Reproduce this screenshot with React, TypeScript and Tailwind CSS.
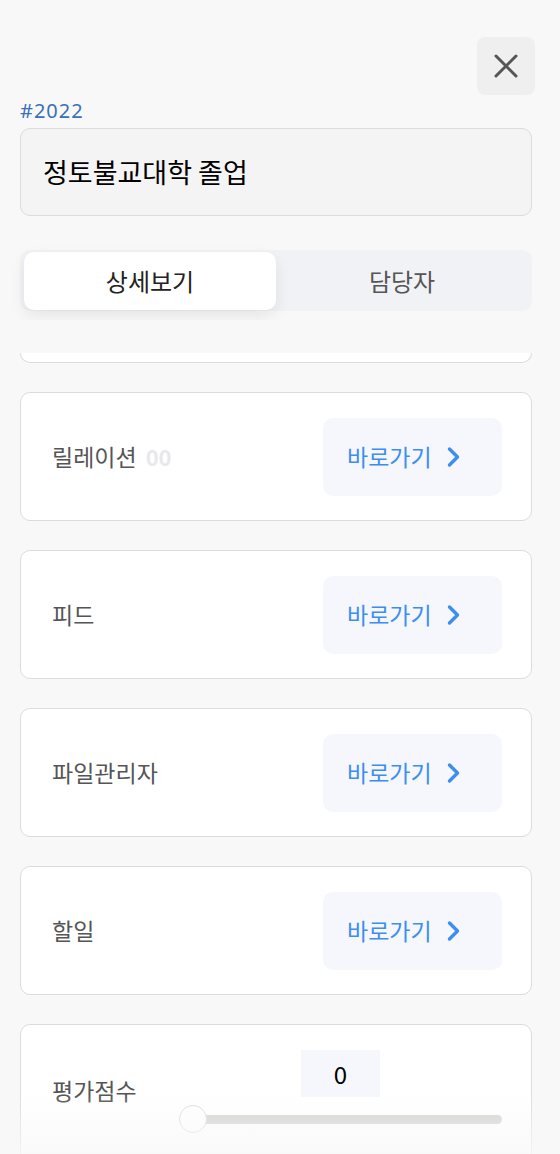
import React from 'react';

const links = ['릴레이션', '피드', '파일관리자', '할일'];

function Chevron() {
  return (
    <svg width="15" height="22" viewBox="0 0 15 22" fill="none" className="ml-[14px]">
      <path d="M3.5 3 L11.5 11 L3.5 19" stroke="#3d8ef0" strokeWidth="3.4" strokeLinecap="round" strokeLinejoin="round" />
    </svg>
  );
}

function LinkCard({ label }: { label: string }) {
  return (
    <div className="flex h-[129px] items-center justify-between rounded-[10px] border border-[#dcdcdc] bg-white pl-[31px] pr-[29px]">
      <div className="flex items-center text-[23px] text-[#555]">
        {label}
        {label === '릴레이션' && <span className="ml-[9px] text-[22px] font-bold text-[#e8e8ec]">00</span>}
      </div>
      <button className="flex h-[78px] w-[179px] items-center rounded-[10px] bg-[#f5f7fd] pl-[24px] text-[23px] text-[#3d8ef0]">
        바로가기
        <Chevron />
      </button>
    </div>
  );
}

export default function App() {
  return (
    <div
      className="relative h-[1154px] w-[560px] overflow-hidden bg-[#f8f8f8]"
      style={{ fontFamily: '"Noto Sans CJK KR", "Noto Sans", sans-serif' }}
    >
      <div className="pl-5 pr-[28px] pt-[37px]">
        <div className="flex justify-end">
          <button className="-mr-[3px] flex h-[58px] w-[58px] items-center justify-center rounded-lg bg-[#efefef]">
            <svg width="24" height="24" viewBox="0 0 24 24" fill="none">
              <path d="M2 2 L22 22 M22 2 L2 22" stroke="#555" strokeWidth="3" strokeLinecap="round" />
            </svg>
          </button>
        </div>
        <div
          className="-mt-[2px] text-[20px] leading-[35px] tracking-[1px] text-[#3a70b8]"
          style={{ fontFamily: '"Noto Sans", sans-serif' }}
        >
          #2022
        </div>
        <div className="flex h-[88px] items-center rounded-[10px] border border-[#dcdcdc] bg-[#f4f4f4] pl-[22px] text-[27px] text-black">
          정토불교대학 졸업
        </div>
        <div className="mt-[34px] flex h-[61px] rounded-[10px] bg-[#f1f2f6] px-1 pb-px pt-[2px]">
          <div className="flex flex-1 items-center justify-center rounded-[10px] bg-white text-[24px] text-[#222] shadow-[0_6px_16px_rgba(0,0,0,0.08)]">
            상세보기
          </div>
          <div className="flex flex-1 items-center justify-center text-[24px] text-[#555]">담당자</div>
        </div>
      </div>

      <div className="relative mt-[42px] pl-5 pr-[28px]">
        <div className="h-[10px] rounded-b-[10px] border-x border-b border-[#dcdcdc] bg-white" />
        <div className="mt-[29px] flex flex-col gap-[29px]">
          {links.map((l) => (
            <LinkCard key={l} label={l} />
          ))}
          <div className="relative h-[140px] rounded-[10px] border border-[#dcdcdc] bg-white">
            <div className="absolute left-[31px] top-[48px] text-[23px] text-[#555]">평가점수</div>
            <div className="absolute left-[280px] top-[25px] flex h-[47px] w-[79px] items-center justify-center bg-[#f6f7fc] text-[24px] text-black">
              0
            </div>
            <div className="absolute left-[159px] right-[29px] top-[90px] h-[9px] rounded-full bg-[#d3d2d0]" />
            <div className="absolute left-[158px] top-[80px] h-[28px] w-[28px] rounded-full border border-[#dcdcdc] bg-white" />
          </div>
        </div>
      </div>

      <div className="pointer-events-none absolute left-0 right-0 top-[320px] h-[34px] bg-gradient-to-b from-[#f8f8f8] to-transparent" />
      <div className="pointer-events-none absolute bottom-0 left-0 right-0 h-[60px] bg-gradient-to-t from-[#f8f8f8]/80 to-transparent" />
    </div>
  );
}
